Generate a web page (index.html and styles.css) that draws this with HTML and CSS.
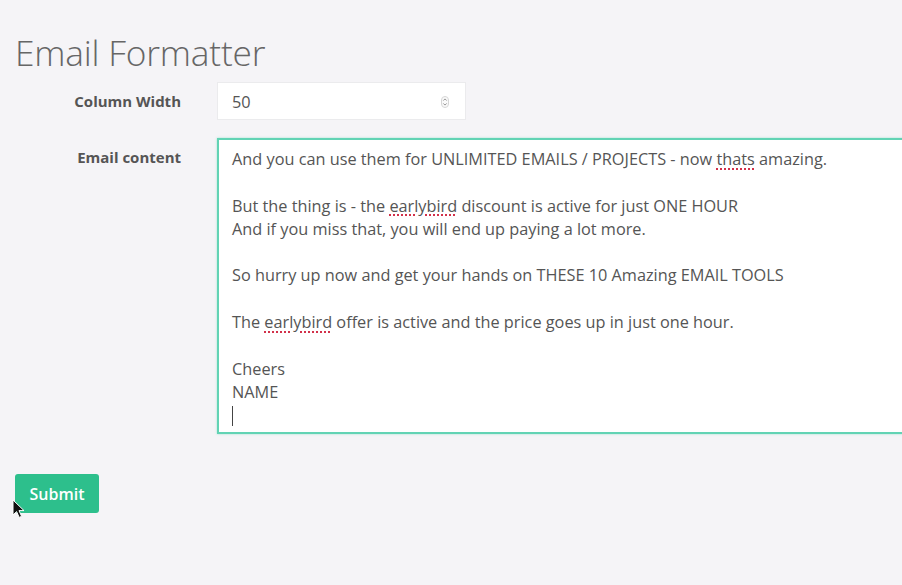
FILE: index.html
```html
<!DOCTYPE html>
<html>
<head>
<meta charset="utf-8">
<link rel="stylesheet" href="styles.css">
</head>
<body>
<div class="page">
  <h1 class="title">Email Formatter</h1>
  <form class="form">
    <div class="row">
      <label class="label">Column Width</label>
      <div class="number-input">
        <span class="value">50</span>
        <svg class="spinner" width="8" height="12" viewBox="0 0 8 12">
          <rect x="0.5" y="0.5" width="7" height="11" rx="3.5" fill="#fafafa" stroke="#d6d6d6"/>
          <path d="M2.3 4.6 L4 2.9 L5.7 4.6" fill="none" stroke="#8a8a8a" stroke-width="0.9"/>
          <path d="M2.3 7.4 L4 9.1 L5.7 7.4" fill="none" stroke="#8a8a8a" stroke-width="0.9"/>
        </svg>
      </div>
    </div>
    <div class="row">
      <label class="label">Email content</label>
      <div class="textarea">
        <p>And you can use them for UNLIMITED EMAILS / PROJECTS - now <span class="spell">thats</span> amazing.</p>
        <p>&nbsp;</p>
        <p>But the thing is - the <span class="spell">earlybird</span> discount is active for just ONE HOUR</p>
        <p>And if you miss that, you will end up paying a lot more.</p>
        <p>&nbsp;</p>
        <p>So hurry up now and get your hands on THESE 10 Amazing EMAIL TOOLS</p>
        <p>&nbsp;</p>
        <p>The <span class="spell">earlybird</span> offer is active and the price goes up in just one hour.</p>
        <p>&nbsp;</p>
        <p>Cheers</p>
        <p>NAME</p>
        <p><span class="caret"></span></p>
      </div>
    </div>
    <div class="actions">
      <button type="button" class="submit">Submit</button>
      <svg class="pointer" width="14" height="20" viewBox="0 0 14 20">
        <path d="M1 1 L1 16 L4.6 12.6 L7.2 18.4 L9.6 17.3 L7 11.6 L12 11.6 Z" fill="#111" stroke="#fff" stroke-width="1"/>
      </svg>
    </div>
  </form>
</div>
</body>
</html>
```
FILE: styles.css
```css
html, body {
  margin: 0;
  padding: 0;
  background: #f5f4f7;
  overflow: hidden;
}
body {
  font-family: "Open Sans", "Liberation Sans", sans-serif;
  color: #555;
  width: 902px;
  height: 585px;
}
.page {
  padding: 0 0 0 15px;
}
.title {
  margin: 0;
  padding-top: 28px;
  font-size: 35.3px;
  font-weight: 300;
  line-height: 48px;
  color: #666;
  letter-spacing: -0.2px;
}
.form {
  margin-top: 6px;
}
.row {
  display: grid;
  grid-template-columns: 166px 1fr;
  column-gap: 36px;
  margin-bottom: 18px;
}
.label {
  text-align: right;
  font-weight: 700;
  font-size: 15px;
  color: #555;
  height: 38px;
  line-height: 38px;
}
.number-input {
  width: 249px;
  height: 38px;
  box-sizing: border-box;
  background: #fff;
  border: 1px solid #ebebed;
  display: flex;
  align-items: center;
  justify-content: space-between;
  padding: 1px 16px 0 14px;
  font-size: 16.3px;
  color: #555;
}
.spinner {
  display: block;
}
.textarea {
  width: 720px;
  height: 296px;
  box-sizing: border-box;
  background: #fff;
  border: 2px solid #62d3b4;
  box-shadow: 0 0 2px rgba(98, 211, 180, 0.6);
  padding: 8px 13px;
  font-size: 16.3px;
  line-height: 23.3px;
  color: #555;
}
.textarea p {
  margin: 0;
  white-space: nowrap;
}
.spell {
  text-decoration: underline dotted #d2314a;
  text-decoration-thickness: 1.5px;
  text-underline-offset: 3px;
}
.caret {
  display: inline-block;
  width: 1px;
  height: 20px;
  background: #444;
  vertical-align: -5px;
}
.actions {
  position: relative;
  margin-top: 40px;
}
.submit {
  font-family: "Open Sans", "Liberation Sans", sans-serif;
  background: #2dbf8c;
  color: #fff;
  border: none;
  border-radius: 3px;
  width: 84px;
  height: 39px;
  font-size: 16px;
  font-weight: 600;
  padding: 0;
  cursor: pointer;
}
.pointer {
  position: absolute;
  left: -3px;
  top: 25px;
}
```
